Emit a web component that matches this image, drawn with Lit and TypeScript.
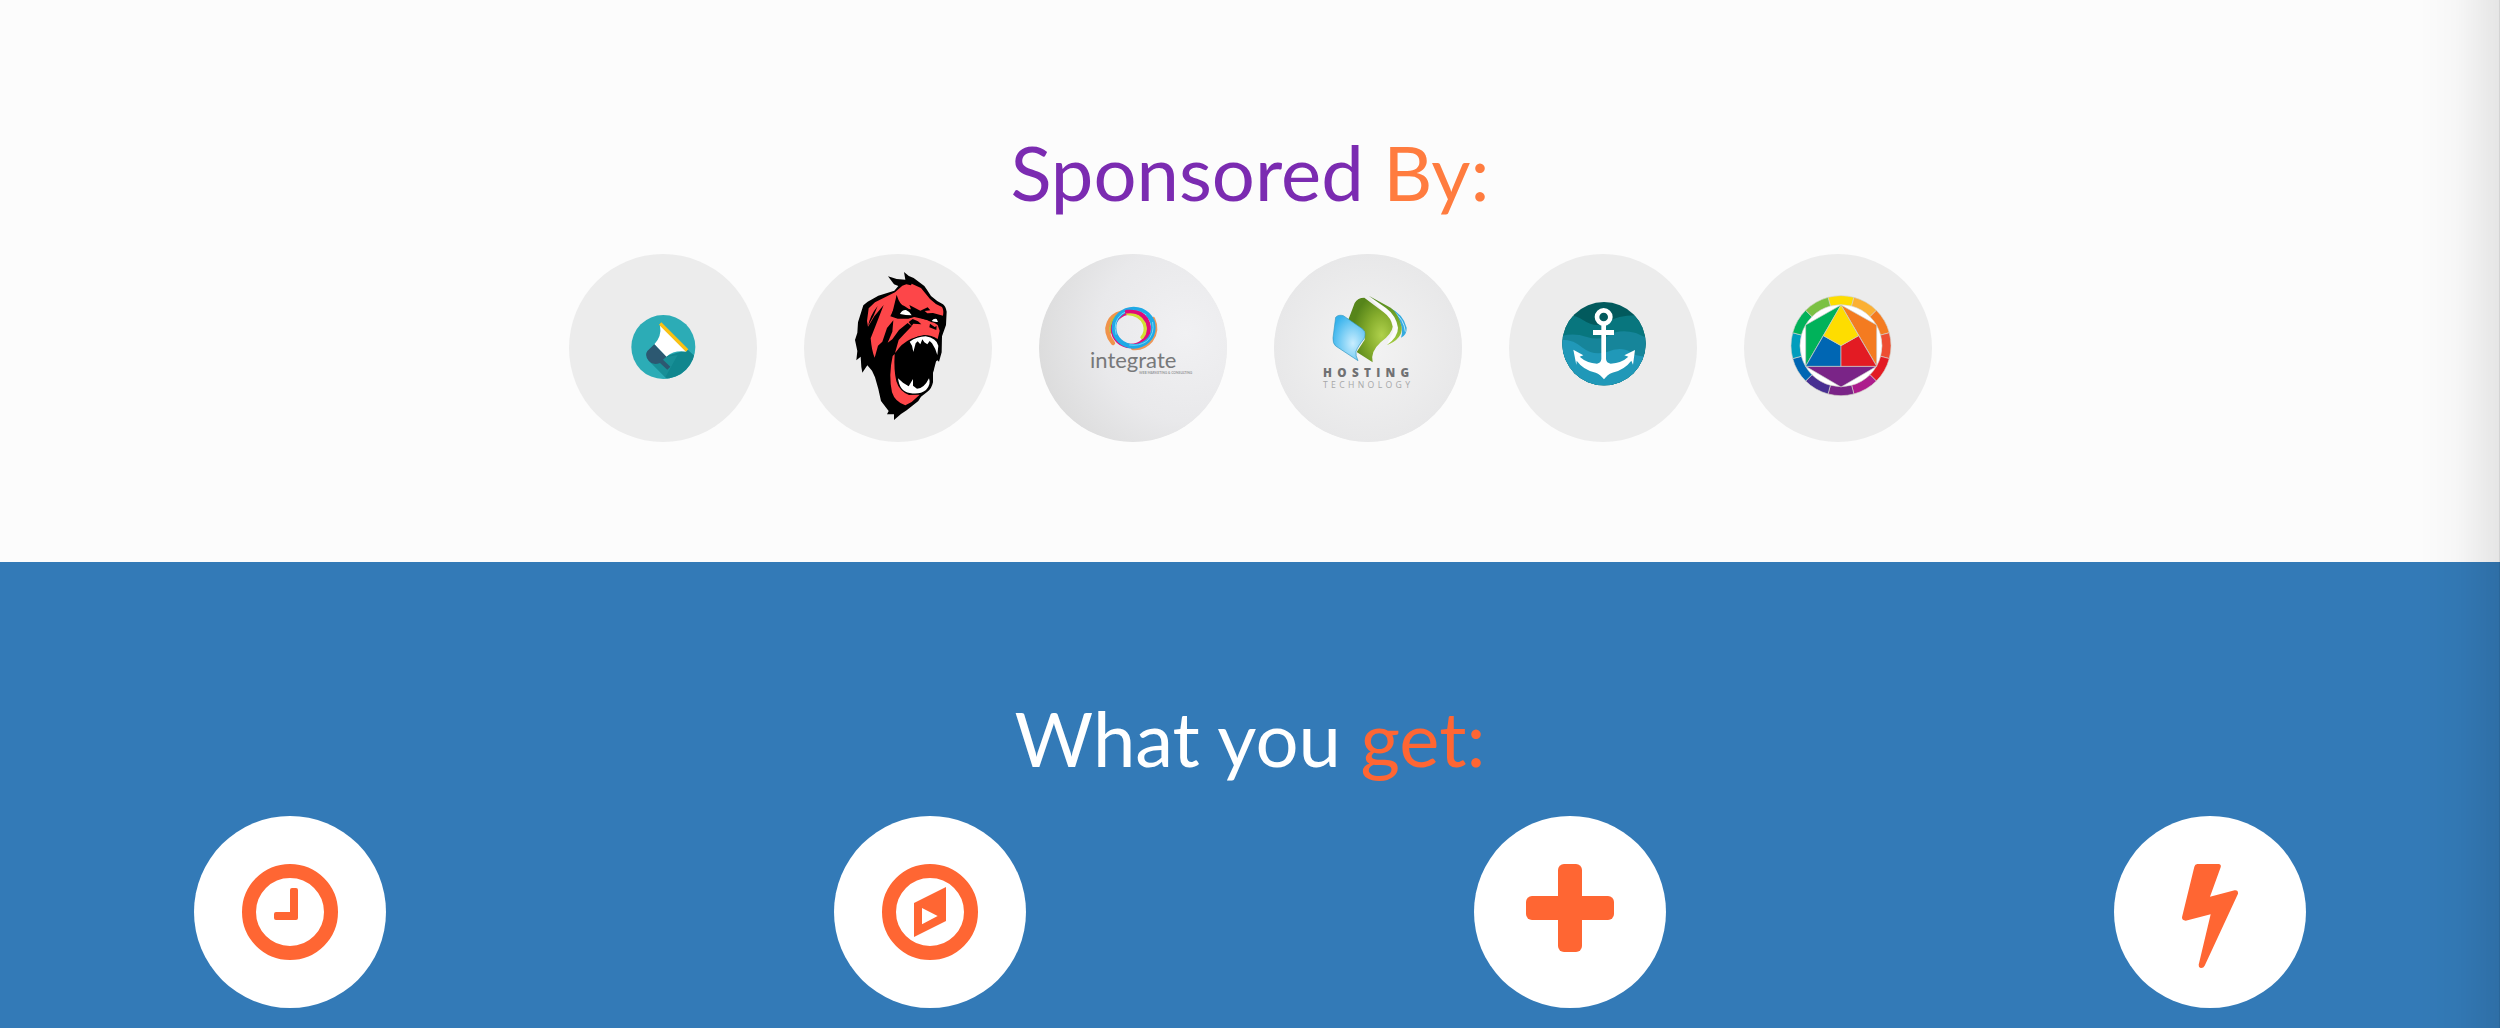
import { LitElement, html, css, svg, SVGTemplateResult } from "lit";
import { customElement } from "lit/decorators.js";

interface Mark {
  name: string;
  box: string;
  tone: string;
  art: SVGTemplateResult;
}

const megaphone = svg`
  <clipPath id="mega-clip"><circle cx="307" cy="306" r="96"/></clipPath>
  <circle cx="307" cy="306" r="96" fill="#2cacb6"/>
  <path clip-path="url(#mega-clip)" d="M262 346 L312 334 L380 314 L420 350 L420 420 L336 420 Z" fill="#10868e"/>
  <path clip-path="url(#mega-clip)" d="M262 346 L336 420 L300 420 L350 330 Z" fill="#1f979f" opacity=".55"/>
  <path d="M297 241 Q303 274 280 298 L316 335 Q340 314 376 320 Z" fill="#fff"/>
  <path d="M280 298 L316 335 L306 344 L328 365 L319 374 L297 354 Q274 362 262 346 Q250 330 259 318 Z" fill="#2c5871"/>
  <path d="M294 239 L301 232 L382 313 L375 320 Z" fill="#fcc111"/>`;

const gorilla = svg`
  <path fill="#000" d="M327 81 Q338 93 356 99 L388 123 Q396 134 408 153 Q424 168 444 178 Q452 184 455 200 L453 240 L441 274 L440 322 L432 350 L427 346 L420 352 L414 380 L414 412 Q410 430 399 439 L378 455 L370 468 L335 496 L318 507 L297 525 L297 508 L276 508 L281 498 L258 468 L250 432 L240 397 L231 377 L217 361 L202 383 L199 366 L197 335 L184 346 L187 318 L180 285 L187 263 L189 232 L205 181 L218 170 L250 152 L298 137 L310 123 L297 118 L279 94 L305 102 L331 104 Z"/>
  <path fill="#fd4649" d="M322 122 L334 118 L348 121 L350 116 L378 129 L405 162 Q420 178 441 186 Q447 196 444 212 L414 204 L397 205 L389 198 L406 196 L398 187 L376 197 L343 180 L348 193 L325 190 L310 193 L305 150 L301 183 L286 214 L308 221 L340 221 L365 213 L385 222 L410 228 L428 240 L434 257 L428 282 Q410 270 387 270 Q355 275 322 302 L300 324 L311 285 L327 268 L350 244 L338 234 L312 255 L292 283 L278 293 L292 260 L295 226 L276 249 L262 290 L249 302 L239 338 Q230 318 227 280 L240 247 L266 180 L238 214 L219 245 L216 228 L221 190 L240 172 L300 142 Z"/>
  <path fill="#000" d="M219 243 Q226 210 248 183 Q237 215 219 243 Z M305 150 Q315 181 328 183 L345 194 L328 193 L304 204 L291 208 Z M341 231 L353 222 L369 229 L379 238 L355 236 L350 243 Z M405 236 L419 246 L425 243 L424 255 L403 247 Z"/>
  <path fill="#000" d="M302 215 L314 209 L342 213 L354 202 L371 207 L398 207 L414 215 L434 213 L443 224 L434 235 L410 232 L394 224 L358 216 L333 219 Z"/>
  <path fill="#fff" d="M315 207 Q321 194 333 195 Q344 199 350 211 Q332 211 315 207 Z M410 228 Q416 219 425 222 L429 231 Q420 232 410 228 Z"/>
  <path fill="#000" d="M302 323 Q318 295 349 281 Q385 265 418 278 Q435 289 432 310 L424 346 L415 380 L405 407 L387 432 L345 445 L315 430 Q294 390 302 323 Z"/>
  <path fill="#fff" d="M344 290 Q366 275 392 274 Q424 279 430 302 L427 330 Q423 313 411 295 L404 288 L397 298 L388 292 L382 283 L376 298 L368 289 L362 295 L355 321 L351 302 Z"/>
  <path fill="#fd4649" d="M299 327 Q296 375 304 409 Q313 439 342 450 L374 449 L350 471 L331 481 Q300 471 291 442 Q280 390 293 333 Z"/>
  <path fill="#fff" d="M309 400 L324 413 L341 424 L354 402 L354 422 L366 431 Q387 431 402 400 Q409 418 393 435 Q374 450 344 444 Q314 440 309 400 Z"/>`;

const integrate = svg`
  <defs>
    <radialGradient id="int-bg" cx=".78" cy=".42" r=".85">
      <stop offset="0" stop-color="#f1f1f3"/><stop offset=".55" stop-color="#e9e9eb"/><stop offset="1" stop-color="#dadada"/>
    </radialGradient>
  </defs>
  <circle cx="306" cy="309" r="282" fill="url(#int-bg)"/>
  <g fill="none" stroke-linecap="round">
    <path d="M246 294 Q221 262 233 234 Q242 211 272 203" stroke="#f0934a" stroke-width="13"/>
    <path d="M366 222 Q382 256 360 286 Q338 312 306 309" stroke="#ee9658" stroke-width="13"/>
    <path d="M240 262 Q234 234 256 214" stroke="#b5c431" stroke-width="8"/>
    <ellipse cx="299" cy="253" rx="53" ry="50" stroke="#df0f7c" stroke-width="13"/>
    <path d="M290 206 Q326 208 340 236 Q348 260 333 277" stroke="#d2df35" stroke-width="10"/>
    <ellipse cx="308" cy="248" rx="59" ry="56" stroke="#1fa9e6" stroke-width="14"/>
    <path d="M255 268 Q245 230 272 207 Q306 184 345 209" stroke="#74d4f7" stroke-width="3"/>
    <path d="M365 232 Q372 266 347 289 Q324 304 296 300" stroke="#74d4f7" stroke-width="3"/>
    <path d="M287 200 Q330 196 346 222 Q358 242 352 264" stroke="#df0b79" stroke-width="11"/>
  </g>
  <text x="177" y="370" class="word">integrate</text>
  <text x="324" y="386" class="tagline">WEB MARKETING &amp; CONSULTING</text>`;

const hosting = svg`
  <defs>
    <radialGradient id="host-bg"><stop offset="0" stop-color="#f3f3f3"/><stop offset="1" stop-color="#e8e8e9"/></radialGradient>
    <radialGradient id="host-green" cx=".75" cy=".58" r=".65"><stop offset="0" stop-color="#b0d14c"/><stop offset=".5" stop-color="#86ad2d"/><stop offset="1" stop-color="#56851a"/></radialGradient>
    <radialGradient id="host-blue" cx=".62" cy=".62" r=".7"><stop offset="0" stop-color="#c8edff"/><stop offset="1" stop-color="#35b2ec"/></radialGradient>
    <linearGradient id="host-edge" x1="0" y1="0" x2="0" y2="1"><stop offset="0" stop-color="#4f861b"/><stop offset="1" stop-color="#a4cc40"/></linearGradient>
  </defs>
  <circle cx="309" cy="309" r="282" fill="url(#host-bg)"/>
  <path d="M313 156 L362 189 Q393 211 399 248 Q400 275 365 301 L384 262 Q390 240 370 216 Z" fill="#fbfbfb"/>
  <path d="M374 188 Q415 207 425 248 Q426 269 408 278 Q422 237 374 188 Z" fill="#35aade"/>
  <path d="M387 201 Q417 223 421 260" fill="none" stroke="#b6e6fa" stroke-width="3"/>
  <path d="M311 152 L377 188 Q400 204 410 246 Q414 281 365 301 Q400 275 399 248 Q393 211 363 189 Z" fill="url(#host-edge)"/>
  <path d="M250 224 L269 174 Q278 158 298 158 L356 202 Q379 219 383 245 Q381 266 347 292 Q315 321 323 352 L275 321 L299 284 L300 260 Z" fill="url(#host-green)"/>
  <path d="M212 217 Q220 208 235 212 L293 252 Q305 264 297 281 Q278 305 273 319 Q271 332 279 347 L212 303 Q203 295 204 279 Z" fill="url(#host-blue)" stroke="#3498c1" stroke-width="2"/>
  <text x="174" y="396" class="host">HOSTING</text>
  <text x="174" y="429" class="tech">TECHNOLOGY</text>`;

const anchor = svg`
  <clipPath id="sea-clip"><circle cx="309" cy="296" r="125"/></clipPath>
  <g clip-path="url(#sea-clip)">
    <rect x="180" y="165" width="260" height="260" fill="#025a5d"/>
    <path d="M180 214 Q218 206 246 225 Q285 251 318 232 Q360 204 440 213 V430 H180 Z" fill="#08767e"/>
    <path d="M180 273 Q220 263 255 275 Q290 286 318 275 Q352 249 405 264 Q425 274 440 279 V430 H180 Z" fill="#16859a"/>
    <path d="M180 284 Q218 283 246 309 Q277 333 318 321 Q360 303 389 322 Q416 340 440 330 V430 H180 Z" fill="#2098b8"/>
  </g>
  <circle cx="308" cy="216" r="20" fill="none" stroke="#fff" stroke-width="14"/>
  <path fill="#fff" d="M301 240 H315 V255 H339 V270 H315 V342 Q316 354 329 356 Q362 354 382 335 L370 331 L402 315 L396 359 L391 347 Q370 375 334 383 Q319 388 309 403 Q298 388 284 383 Q247 375 227 347 L226 360 L217 314 L247 331 L236 335 Q257 354 288 356 Q300 354 301 342 V270 H276 V255 H301 Z"/>`;

const wheelTones = ["#fedd00", "#fbb034", "#f47b20", "#ee4e32", "#e31b23", "#ad1c8c", "#7a2487", "#472f92", "#0066b3", "#009dbd", "#00b25a", "#7ac143"];

function wheelSegment(tone: string, i: number): SVGTemplateResult {
  const at = (r: number, deg: number) => {
    const a = ((deg - 90) * Math.PI) / 180;
    return `${(318 + r * Math.cos(a)).toFixed(1)} ${(302 + r * Math.sin(a)).toFixed(1)}`;
  };
  const from = i * 30 - 15;
  const to = from + 30;
  const d = `M${at(150, from)} A150 150 0 0 1 ${at(150, to)} L${at(123, to)} A123 123 0 0 0 ${at(123, from)} Z`;
  return svg`<path d=${d} fill=${tone} stroke="#d4d4cc" stroke-width="2"/>`;
}

const wheel = svg`
  <circle cx="318" cy="302" r="126" fill="#fff"/>
  ${wheelTones.map(wheelSegment)}
  <g stroke="#c9cbc8" stroke-width="2" stroke-linejoin="round">
    <path d="M318 180 L212 240 V363 Z" fill="#00b25a"/>
    <path d="M318 180 L425 240 V363 Z" fill="#f47b20"/>
    <path d="M212 364 H425 L318 426 Z" fill="#7a2487"/>
    <path d="M265 272 L318 302 V364 H212 Z" fill="#0066b3"/>
    <path d="M371 272 L318 302 V364 H425 Z" fill="#e31b23"/>
    <path d="M318 180 L371 272 L318 302 L265 272 Z" fill="#fedd00"/>
  </g>`;

const sponsors: Mark[] = [
  { name: "Megaphone", box: "24 27 564 564", tone: "flat", art: megaphone },
  { name: "Gorilla", box: "27 27 564 564", tone: "flat", art: gorilla },
  { name: "Integrate", box: "24 27 564 564", tone: "flat", art: integrate },
  { name: "Hosting Technology", box: "27 27 564 564", tone: "flat", art: hosting },
  { name: "Anchor", box: "24 27 564 564", tone: "flat", art: anchor },
  { name: "Colour wheel", box: "27 27 564 564", tone: "flat", art: wheel },
];

const ring = svg`<circle cx="330" cy="321" r="123" fill="none" stroke="currentColor" stroke-width="42"/>`;

const features: Mark[] = [
  {
    name: "Time", box: "42 33 576 576", tone: "white",
    art: svg`${ring}<path fill="currentColor" d="M336 249 H348 Q354 249 354 255 V339 Q354 345 348 345 H288 Q282 345 282 339 V327 Q282 321 288 321 H330 V255 Q330 249 336 249 Z"/>`,
  },
  {
    name: "Compass", box: "42 33 576 576", tone: "white",
    art: svg`${ring}<path fill="currentColor" fill-rule="evenodd" d="M282 294 L378 246 V348 L282 396 Z M306 309 V358 L353 333 Z"/>`,
  },
  {
    name: "Plus", box: "42 33 576 576", tone: "white",
    art: svg`<g fill="currentColor"><rect x="294" y="177" width="72" height="264" rx="18"/><rect x="198" y="273" width="264" height="72" rx="18"/></g>`,
  },
  {
    name: "Flash", box: "42 858 576 576", tone: "white",
    art: svg`<path fill="currentColor" d="M292 1002 H355 Q365 1003 362 1012 L330 1100 L404 1081 Q415 1080 414 1091 L314 1307 Q310 1315 302 1314 Q295 1312 296 1304 L332 1153 L257 1172 Q246 1172 246 1162 L283 1010 Q285 1003 292 1002 Z"/>`,
  },
];

@customElement("app-root")
export class AppRoot extends LitElement {
  static styles = css`
    :host {
      display: block;
      position: relative;
      min-height: 100vh;
      overflow: hidden;
      background: #337ab7;
      font-family: Lato, "Open Sans", sans-serif;
    }
    :host::after {
      content: "";
      position: absolute;
      inset: 0 0 0 auto;
      width: 80px;
      pointer-events: none;
      border-right: 1px solid rgba(0, 0, 0, 0.16);
      background: linear-gradient(to right, rgba(0, 0, 0, 0), rgba(0, 0, 0, 0.02) 45%, rgba(0, 0, 0, 0.09));
    }
    .sponsors {
      background: #fcfcfc;
      padding: 122px 24px 120px;
    }
    .features {
      color: #fff;
      padding: 126px 0 20px;
    }
    .title {
      margin: 0 0 32px;
      font-size: 76px;
      line-height: 100px;
      font-weight: 400;
      text-align: center;
      color: #7b2bb1;
    }
    .features .title {
      margin-bottom: 28px;
      color: #fff;
    }
    .accent {
      color: #ff7c3f;
    }
    .features .accent {
      color: #ff6633;
    }
    .logos {
      display: flex;
      flex-wrap: wrap;
      justify-content: center;
      gap: 47px;
      margin: 0;
      padding: 0;
      list-style: none;
    }
    .perks {
      display: grid;
      grid-template-columns: repeat(4, 1fr);
      justify-items: center;
      margin: 0 -30px;
      padding: 0;
      list-style: none;
    }
    .disc {
      border-radius: 50%;
      overflow: hidden;
    }
    .flat {
      width: 188px;
      height: 188px;
      background: #ececec;
    }
    .white {
      width: 192px;
      height: 192px;
      background: #fff;
      color: #ff6633;
    }
    .mark {
      display: block;
      width: 100%;
      height: 100%;
    }
    .word {
      font-family: Lato, sans-serif;
      font-weight: 400;
      font-size: 66px;
      fill: #77787a;
    }
    .tagline {
      font-family: Lato, sans-serif;
      font-weight: 700;
      font-size: 10px;
      fill: #97989a;
    }
    .host {
      font-family: "Open Sans", sans-serif;
      font-weight: 800;
      font-size: 35px;
      letter-spacing: 16px;
      fill: #707173;
    }
    .tech {
      font-family: "Open Sans", sans-serif;
      font-weight: 400;
      font-size: 26px;
      letter-spacing: 10px;
      fill: #a6a7a8;
    }
  `;

  private disc(mark: Mark) {
    return html`<li class="disc ${mark.tone}">
      <svg class="mark" viewBox=${mark.box} role="img" aria-label=${mark.name}>${mark.art}</svg>
    </li>`;
  }

  render() {
    return html`
      <section class="sponsors">
        <h2 class="title">Sponsored <span class="accent">By:</span></h2>
        <ul class="logos">${sponsors.map((m) => this.disc(m))}</ul>
      </section>
      <section class="features">
        <h2 class="title">What you <span class="accent">get:</span></h2>
        <ul class="perks">${features.map((m) => this.disc(m))}</ul>
      </section>
    `;
  }
}
